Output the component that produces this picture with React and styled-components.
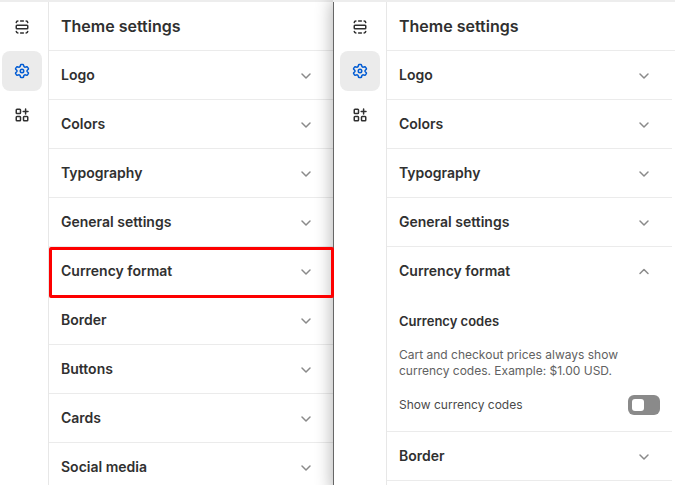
import React, { useState } from "react";
import styled, { createGlobalStyle, css } from "styled-components";

const GlobalStyle = createGlobalStyle`
  *, *::before, *::after { box-sizing: border-box; }
  body {
    margin: 0;
    background: #fff;
    color: #303030;
    font-family: Inter, "Liberation Sans", sans-serif;
    overflow: hidden;
  }
  button { font: inherit; color: inherit; }
`;

const Page = styled.main`
  display: grid;
  grid-template-columns: 334fr 341fr;
  height: 100vh;
  overflow: hidden;
`;

const Pane = styled.section`
  display: flex;
  min-width: 0;
  background: #fff;
  border-top: 2px solid #dcdcdc;
  border-image: linear-gradient(#ededed 50%, #cecece 50%) 2 0 0 0;

  ${(p) =>
    p.$front &&
    css`
      margin-left: -1px;
      box-shadow: -1px 0 16px rgba(0, 0, 0, 0.3);
    `}
`;

const PaneEdge = styled.div`
  flex: 0 0 1px;
  background: #666;
`;

const Rail = styled.nav`
  display: flex;
  flex-direction: column;
  flex: none;
  gap: 4px;
  padding: 5px 6px 0 ${(p) => (p.$cropped ? "2px" : "6px")};
`;

const RailButton = styled.button`
  display: grid;
  place-items: center;
  width: 40px;
  height: 40px;
  padding: 0;
  border: 0;
  border-radius: 8px;
  background: ${(p) => (p.$active ? "#ebebeb" : "transparent")};
  color: ${(p) => (p.$active ? "#005bd3" : "#303030")};
  cursor: pointer;
`;

const Panel = styled.div`
  flex: 1;
  min-width: 0;
  border-left: 1px solid #e7e7e7;
`;

const PanelHeader = styled.header`
  display: flex;
  align-items: center;
  height: 49px;
  padding: 0 12px;
  border-bottom: 1px solid #ebebeb;
`;

const PanelTitle = styled.h1`
  margin: 0;
  font-size: 16px;
  line-height: 24px;
  font-weight: 600;
`;

const Sections = styled.div`
  margin-right: ${(p) => (p.$gutter ? "3px" : "0")};
`;

const Section = styled.div`
  border-bottom: 1px solid #ebebeb;

  ${(p) =>
    p.$highlighted &&
    css`
      position: relative;
      z-index: 1;
      height: 51px;
      margin-bottom: -2px;
      border: 0;

      &::after {
        content: "";
        position: absolute;
        inset: 0;
        border: 3px solid #fd0000;
        border-radius: 2px;
        pointer-events: none;
      }
    `}
`;

const SectionHeading = styled.h2`
  margin: 0;
  font-size: 14px;
  line-height: 20px;
  font-weight: 600;
`;

const SectionButton = styled.button`
  display: flex;
  align-items: center;
  justify-content: space-between;
  width: 100%;
  height: 48px;
  padding: 0 18px 0 12px;
  border: 0;
  background: transparent;
  text-align: left;
  cursor: pointer;
`;

const SectionBody = styled.div`
  display: grid;
  gap: 16px;
  padding: 16px 12px;
`;

const GroupTitle = styled.h3`
  margin: 0;
  font-size: 13px;
  line-height: 20px;
  font-weight: 600;
`;

const Description = styled.p`
  max-width: 232px;
  margin: 0;
  color: #616161;
  font-size: 12px;
  line-height: 16px;
`;

const SwitchRow = styled.label`
  display: flex;
  align-items: center;
  justify-content: space-between;
  color: #4a4a4a;
  font-size: 12px;
  line-height: 20px;
  cursor: pointer;
`;

const Switch = styled.input`
  appearance: none;
  display: flex;
  width: 32px;
  height: 20px;
  margin: 0;
  padding: 4px;
  border-radius: 6px;
  background: #8a8a8a;
  cursor: pointer;

  &::before {
    content: "";
    width: 12px;
    height: 12px;
    border-radius: 3px;
    background: #fff;
  }

  &:checked {
    justify-content: flex-end;
    background: #303030;
  }
`;

const Glyph = styled.svg.attrs({
  viewBox: "0 0 20 20",
  fill: "none",
  stroke: "currentColor",
  strokeWidth: 1.5,
  strokeLinecap: "round",
  strokeLinejoin: "round",
  "aria-hidden": true,
})`
  display: block;
  width: 20px;
  height: 20px;
`;

const ChevronGlyph = styled(Glyph)`
  color: #8a8a8a;
`;

const SectionsIcon = () => (
  <Glyph>
    <rect x="4.25" y="8.25" width="11.5" height="3.5" rx="0.75" />
    <path d="M4.25 5.6A1.7 1.7 0 0 1 5.9 4.1M8.6 4h2.8M14.1 4.1a1.7 1.7 0 0 1 1.65 1.5M4.25 14.4a1.7 1.7 0 0 0 1.65 1.5M8.6 16h2.8M14.1 15.9a1.7 1.7 0 0 0 1.65-1.5" />
  </Glyph>
);

const SettingsIcon = () => (
  <Glyph>
    <circle cx="10" cy="10" r="1.75" />
    <path d="M9.1 3.4h1.8q.5 0 .6.5l.3 1.3q.1.4.5.6l.4.2q.4.2.8.1l1.3-.4q.5-.1.7.3l.9 1.6q.2.4-.1.7l-1 .9q-.3.3-.3.8t.3.8l1 .9q.3.3.1.7l-.9 1.6q-.2.4-.7.3l-1.3-.4q-.4-.1-.8.1l-.4.2q-.4.2-.5.6l-.3 1.3q-.1.5-.6.5H9.1q-.5 0-.6-.5l-.3-1.3q-.1-.4-.5-.6l-.4-.2q-.4-.2-.8-.1l-1.3.4q-.5.1-.7-.3L3.600 12.400q-.2-.4.1-.7l1-.9q.3-.3.3-.8t-.3-.8l-1-.9q-.3-.3-.1-.7L4.500 6q.2-.4.7-.3l1.3.4q.4.1.8-.1l.4-.2q.4-.2.5-.6l.3-1.3q.1-.5.6-.5z" />
  </Glyph>
);

const AppsIcon = () => (
  <Glyph>
    <rect x="4.25" y="4.25" width="4.25" height="4.25" rx="0.75" />
    <rect x="4.25" y="11.5" width="4.25" height="4.25" rx="0.75" />
    <rect x="11.5" y="11.5" width="4.25" height="4.25" rx="0.75" />
    <path d="M13.6 4.1v4.8M11.2 6.5H16" />
  </Glyph>
);

const Chevron = ({ up }) => (
  <ChevronGlyph>
    <path d={up ? "M6 12.5l4-4 4 4" : "M6 9l4 4 4-4"} />
  </ChevronGlyph>
);

const railItems = [
  { label: "Sections", Icon: SectionsIcon },
  { label: "Theme settings", Icon: SettingsIcon, active: true },
  { label: "App embeds", Icon: AppsIcon },
];

const sectionNames = [
  "Logo",
  "Colors",
  "Typography",
  "General settings",
  "Currency format",
  "Border",
  "Buttons",
  "Cards",
  "Social media",
];

function CurrencySettings() {
  return (
    <SectionBody>
      <GroupTitle>Currency codes</GroupTitle>
      <Description>
        Cart and checkout prices always show currency codes. Example: $1.00 USD.
      </Description>
      <SwitchRow>
        Show currency codes
        <Switch type="checkbox" role="switch" />
      </SwitchRow>
    </SectionBody>
  );
}

function SettingsPane({ front, names, highlighted, initiallyOpen = null }) {
  const [open, setOpen] = useState(initiallyOpen);
  return (
    <Pane $front={front} aria-label="Theme editor">
      {front && <PaneEdge />}
      <Rail $cropped={!front} aria-label="Editor">
        {railItems.map(({ label, Icon, active }) => (
          <RailButton
            key={label}
            type="button"
            aria-label={label}
            $active={active}
          >
            <Icon />
          </RailButton>
        ))}
      </Rail>
      <Panel>
        <PanelHeader>
          <PanelTitle>Theme settings</PanelTitle>
        </PanelHeader>
        <Sections $gutter={front}>
          {names.map((name) => {
            const expanded = open === name;
            return (
              <Section key={name} $highlighted={highlighted === name}>
                <SectionHeading>
                  <SectionButton
                    type="button"
                    aria-expanded={expanded}
                    onClick={() => setOpen(expanded ? null : name)}
                  >
                    {name}
                    <Chevron up={expanded} />
                  </SectionButton>
                </SectionHeading>
                {expanded && name === "Currency format" && <CurrencySettings />}
              </Section>
            );
          })}
        </Sections>
      </Panel>
    </Pane>
  );
}

export default function App() {
  return (
    <>
      <GlobalStyle />
      <Page>
        <SettingsPane names={sectionNames} highlighted="Currency format" />
        <SettingsPane
          front
          names={sectionNames.slice(0, 6)}
          initiallyOpen="Currency format"
        />
      </Page>
    </>
  );
}
